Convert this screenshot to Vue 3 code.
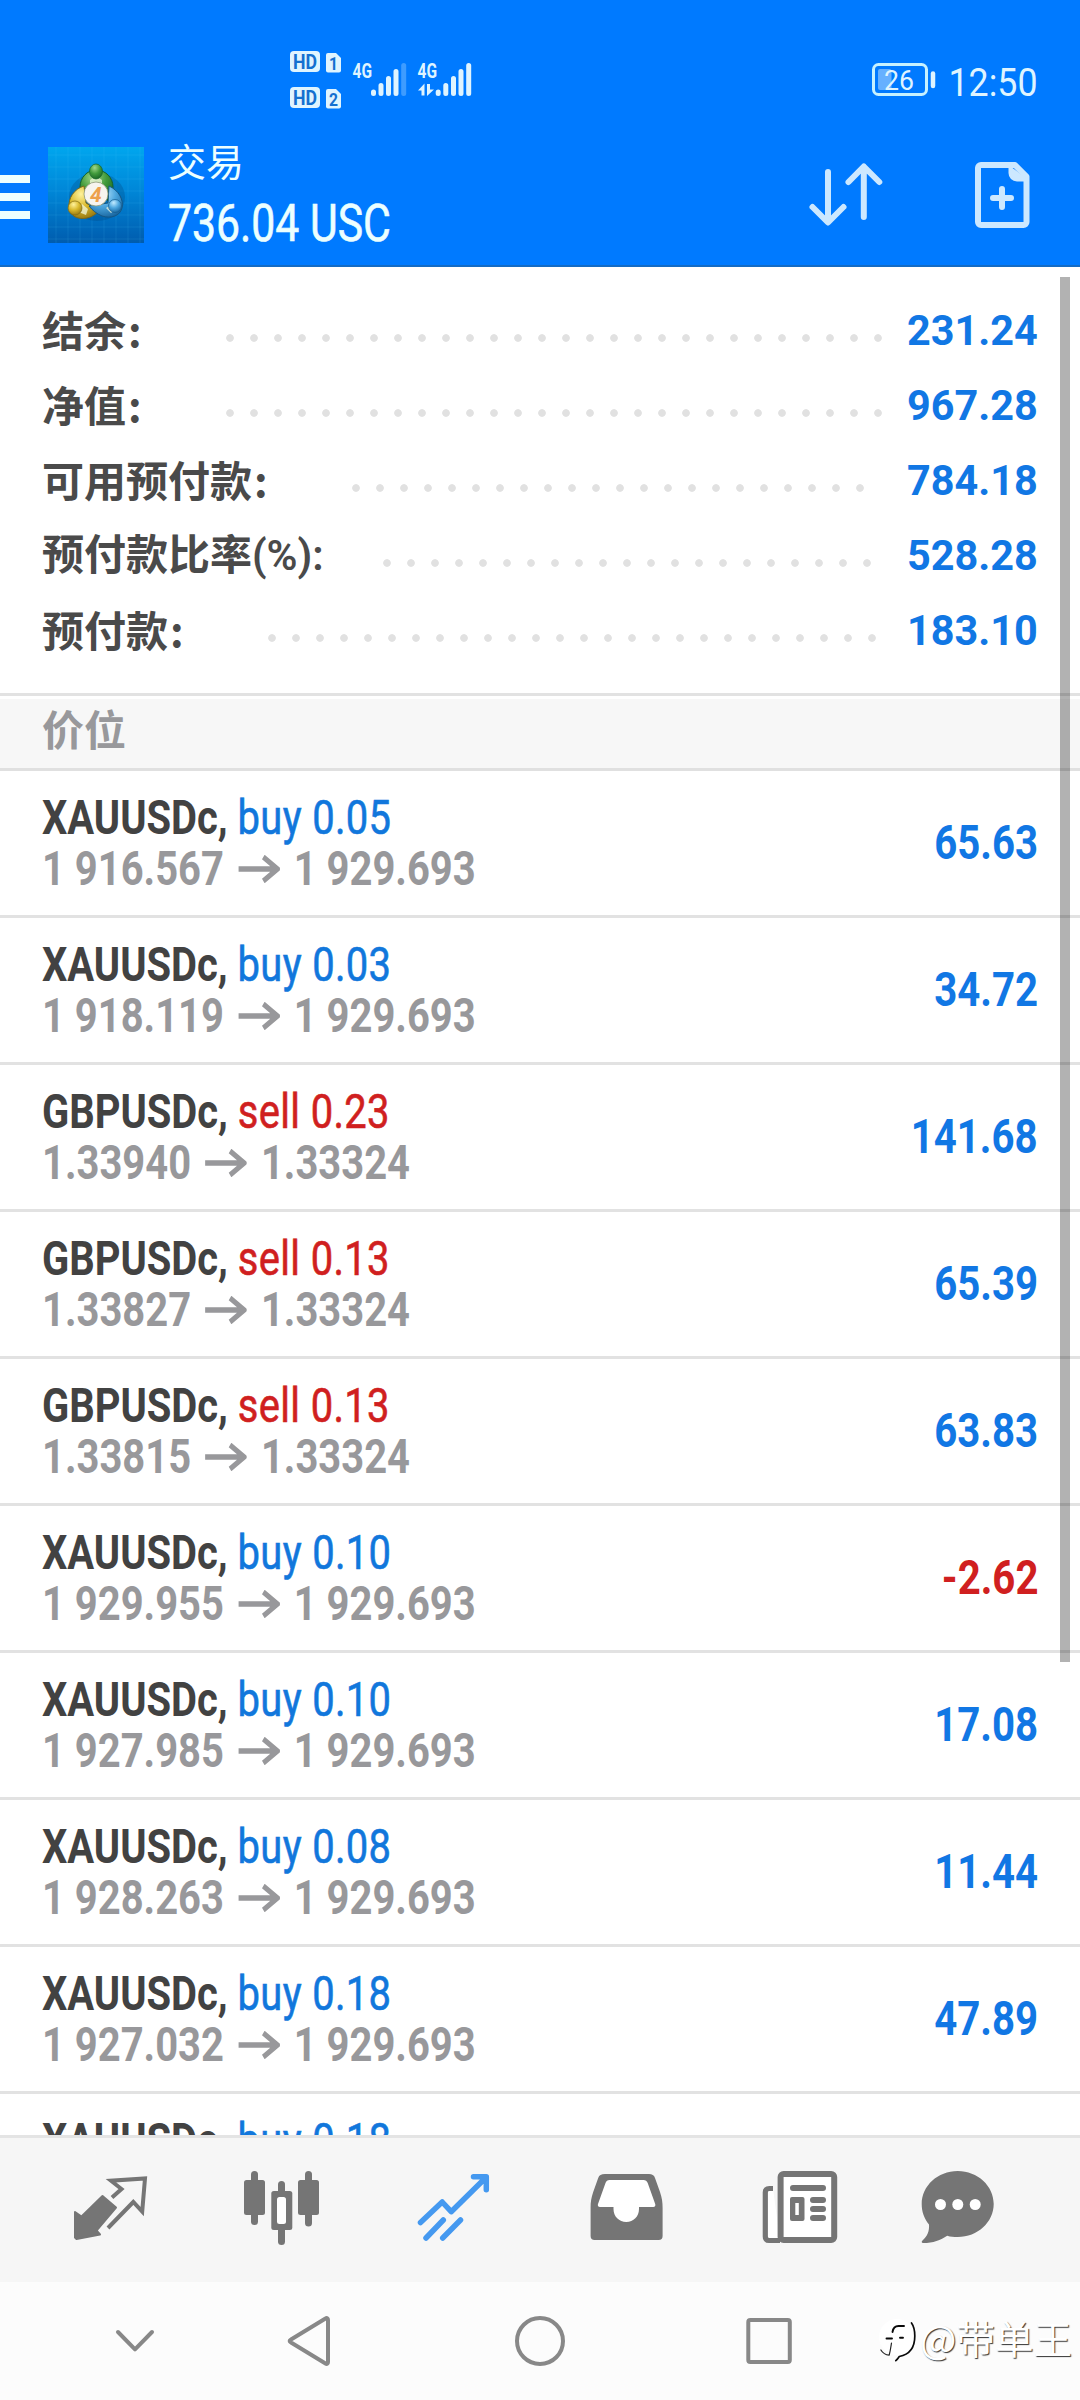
<script setup>
const summary = [
  { label: '结余', suffix: ':', value: '231.24', start: 226, dots: 28 },
  { label: '净值', suffix: ':', value: '967.28', start: 226, dots: 28 },
  { label: '可用预付款', suffix: ':', value: '784.18', start: 352, dots: 22 },
  { label: '预付款比率', latin: '(%):', value: '528.28', start: 383, dots: 21 },
  { label: '预付款', suffix: ':', value: '183.10', start: 268, dots: 26 },
]

const positions = [
  { symbol: 'XAUUSDc', side: 'buy', volume: '0.05', open: '1 916.567', price: '1 929.693', profit: '65.63' },
  { symbol: 'XAUUSDc', side: 'buy', volume: '0.03', open: '1 918.119', price: '1 929.693', profit: '34.72' },
  { symbol: 'GBPUSDc', side: 'sell', volume: '0.23', open: '1.33940', price: '1.33324', profit: '141.68' },
  { symbol: 'GBPUSDc', side: 'sell', volume: '0.13', open: '1.33827', price: '1.33324', profit: '65.39' },
  { symbol: 'GBPUSDc', side: 'sell', volume: '0.13', open: '1.33815', price: '1.33324', profit: '63.83' },
  { symbol: 'XAUUSDc', side: 'buy', volume: '0.10', open: '1 929.955', price: '1 929.693', profit: '-2.62' },
  { symbol: 'XAUUSDc', side: 'buy', volume: '0.10', open: '1 927.985', price: '1 929.693', profit: '17.08' },
  { symbol: 'XAUUSDc', side: 'buy', volume: '0.08', open: '1 928.263', price: '1 929.693', profit: '11.44' },
  { symbol: 'XAUUSDc', side: 'buy', volume: '0.18', open: '1 927.032', price: '1 929.693', profit: '47.89' },
  { symbol: 'XAUUSDc', side: 'buy', volume: '0.18', open: '', price: '', profit: '' },
]
</script>

<template>
  <div class="screen">
    <header class="top">
      <div class="status">
        <svg class="signals" width="190" height="64" viewBox="286 48 190 64">
          <g fill="#dff4ff">
            <rect x="290" y="51" width="30" height="21" rx="4" />
            <path d="M328 53h8l5 5v12.500a2 2 0 0 1-2 2h-11a2 2 0 0 1-2-2V55a2 2 0 0 1 2-2z" />
            <rect x="290" y="87" width="30" height="21" rx="4" />
            <path d="M328 89h8l5 5v12.500a2 2 0 0 1-2 2h-11a2 2 0 0 1-2-2V91a2 2 0 0 1 2-2z" />
          </g>
          <g class="chip">
            <text x="293" y="68.500" textLength="24" lengthAdjust="spacingAndGlyphs" font-size="20">HD</text>
            <text x="293" y="104.500" textLength="24" lengthAdjust="spacingAndGlyphs" font-size="20">HD</text>
            <text x="329" y="70" textLength="9" lengthAdjust="spacingAndGlyphs" font-size="19">1</text>
            <text x="329" y="106" textLength="9" lengthAdjust="spacingAndGlyphs" font-size="19">2</text>
          </g>
          <g class="net">
            <text x="352.500" y="78" textLength="19.500" lengthAdjust="spacingAndGlyphs">4G</text>
            <text x="417.500" y="78" textLength="19.500" lengthAdjust="spacingAndGlyphs">4G</text>
          </g>
          <g stroke="#dff4ff" stroke-width="5" stroke-linecap="round">
            <path d="M373.500 92v1.500M381 85.500v8M388.500 78.500v15M396 71.500v22" />
            <path d="M403.700 65.500v28" opacity=".28" />
            <path d="M438.200 92v1.500M445.800 85.500v8M453.500 78.500v15M461 71.500v22M468.700 65.500v28" />
          </g>
          <path d="M418 90.500l6.500-7v12h-3v-5zM427 84h3v5.500h4l-7 6.500z" fill="#dff4ff" />
        </svg>
        <svg class="battery" width="170" height="44" viewBox="870 58 170 44">
          <rect x="873.500" y="64.500" width="53" height="30" rx="5" fill="none" stroke="#c6f1ff" stroke-width="3" />
          <rect x="878" y="69" width="13.500" height="21" rx="2" fill="#66b0ff" />
          <path d="M933 73.500v12.500" stroke="#dff4ff" stroke-width="4.500" stroke-linecap="round" />
          <text x="884" y="90" font-size="28" textLength="30" lengthAdjust="spacingAndGlyphs">26</text>
          <text x="948.500" y="96" font-size="38" textLength="89" lengthAdjust="spacingAndGlyphs">12:50</text>
        </svg>
      </div>
      <div class="bar">
        <div class="burger"><i></i><i></i><i></i></div>
        <svg class="logo" width="96" height="96" viewBox="0 0 96 96">
          <defs>
            <linearGradient id="sky" x1="0" y1="0" x2="0" y2="1">
              <stop offset="0" stop-color="#00a6ee" />
              <stop offset=".45" stop-color="#0087d8" />
              <stop offset="1" stop-color="#005cae" />
            </linearGradient>
            <radialGradient id="green" cx=".4" cy=".25" r=".8">
              <stop offset="0" stop-color="#a2d78a" /><stop offset=".5" stop-color="#429b3c" /><stop offset="1" stop-color="#176322" />
            </radialGradient>
            <radialGradient id="gold" cx=".4" cy=".25" r=".8">
              <stop offset="0" stop-color="#fff29c" /><stop offset=".5" stop-color="#d9b92c" /><stop offset="1" stop-color="#947510" />
            </radialGradient>
            <radialGradient id="blue" cx=".4" cy=".25" r=".8">
              <stop offset="0" stop-color="#c1eaff" /><stop offset=".5" stop-color="#4da7df" /><stop offset="1" stop-color="#17649e" />
            </radialGradient>
          </defs>
          <rect width="96" height="96" fill="url(#sky)" />
          <path d="M8 0v96M20 0v96M32 0v96M44 0v96M56 0v96M68 0v96M80 0v96M92 0v96M0 8h96M0 20h96M0 32h96M0 44h96M0 56h96M0 68h96M0 80h96M0 92h96" stroke="#50c8ff" stroke-opacity=".13" />
          <ellipse cx="49" cy="50" rx="28" ry="24" fill="#003d70" opacity=".25" />
          <path d="M48 23c10 0 17 8 17 17 0 6-2 10-5 14L48 42 36 51c-3-3-4-7-4-11 0-9 7-17 16-17z" fill="url(#green)" stroke="#14612b" />
          <path d="M36 39c-10 3-16 12-15 22 1 8 9 12 18 10 5-1 9-4 12-7L38 56z" fill="url(#gold)" stroke="#7b6819" />
          <path d="M61 39c9 4 15 13 13 22-2 8-11 11-20 8-5-2-10-6-13-10l19-3z" fill="url(#blue)" stroke="#155785" />
          <path d="M42 33l6-4 6 4v4H42zM28 64l6-7 6 5-2 6zM58 61l6-4 5 4-6 5z" fill="#f2f8dc" opacity=".75" />
          <ellipse cx="48" cy="24.500" rx="6.500" ry="7.500" fill="url(#green)" stroke="#16632a" stroke-width=".7" />
          <circle cx="27" cy="61" r="7" fill="url(#gold)" stroke="#806b16" stroke-width=".7" />
          <circle cx="67" cy="59" r="6.500" fill="url(#blue)" stroke="#145b8e" stroke-width=".7" />
          <circle cx="48" cy="47" r="12" fill="#f7f4ef" stroke="#8f9a78" stroke-width=".8" />
          <text x="42" y="54.500" font-size="21" font-family="Roboto, sans-serif" font-style="italic" font-weight="700" fill="#eda04c">4</text>
        </svg>
        <div class="titles">
          <div class="title">交易</div>
          <div class="equity">736.04 USC</div>
        </div>
        <svg class="actions" width="230" height="76" viewBox="806 156 230 76" fill="none" stroke="#cce8ff" stroke-width="6" stroke-linecap="round" stroke-linejoin="round">
          <path d="M828 172v50M812.500 207l15.500 15.500 15.500-15.500M863.800 217v-50M848.500 182l15.300-15.500 15.500 15.500" />
          <path d="M981 165h34l11.500 11.500V222a3 3 0 0 1-3 3H981a3 3 0 0 1-3-3v-54a3 3 0 0 1 3-3z" />
          <path d="M1010 168v5c0 4 3 7 7 7h9z" fill="#cce8ff" stroke-width="3" />
          <path d="M993 198h18M1002 189v18" />
        </svg>
      </div>
    </header>

    <main class="content">
      <section class="summary">
        <div v-for="row in summary" :key="row.label" class="sum-row">
          <div class="label" :style="{ width: row.start - 42 + 'px' }">
            {{ row.label }}<span v-if="row.latin" class="latin">{{ row.latin }}</span><span v-else class="colon">{{ row.suffix }}</span>
          </div>
          <div class="dots" :style="{ width: row.dots * 24 + 'px' }"></div>
          <div class="amount">{{ row.value }}</div>
        </div>
      </section>
      <div class="section-head">价位</div>
      <div v-for="(p, i) in positions" :key="i" class="pos">
        <div class="info">
          <div class="line"><b>{{ p.symbol }},</b> <span class="deal" :class="p.side">{{ p.side }} {{ p.volume }}</span></div>
          <div v-if="p.open" class="line prices">
            <span>{{ p.open }}</span>
            <svg width="50" height="28" viewBox="0 0 50 28" preserveAspectRatio="none"><path d="M0 14h47M30 2l17 12-17 12" fill="none" stroke="#98989b" stroke-width="5.500" /></svg>
            <span>{{ p.price }}</span>
          </div>
        </div>
        <div v-if="p.profit" class="profit" :class="{ loss: p.profit.startsWith('-') }">{{ p.profit }}</div>
      </div>
      <div class="scrollbar"></div>
    </main>

    <nav class="tabs">
      <svg width="1080" height="144" viewBox="0 2138 1080 144">
        <path d="M75 2212l6.500 4.500 21-20.500 13.500 11.500-19.500 23 3.500 4-23.500 4.500-1.500-1.500z" fill="#757575" stroke="#757575" stroke-width="2" stroke-linejoin="round" />
        <path d="M112 2197.500l9.500-8.500-10.500-8.300 34-2.200-2.800 33-8.900-9.500-25.300 26" fill="none" stroke="#757575" stroke-width="4" />
        <g fill="#757575">
          <rect x="244" y="2180" width="21" height="35" rx="2.500" />
          <rect x="251" y="2171" width="7" height="54" rx="3.500" />
          <rect x="298" y="2180" width="21" height="35" rx="2.500" />
          <rect x="305" y="2171" width="7" height="55.500" rx="3.500" />
          <rect x="271.300" y="2191" width="21" height="39" rx="2.500" />
          <rect x="278" y="2181" width="7" height="64" rx="3.500" />
          <rect x="277" y="2197" width="9" height="27" rx="2.500" fill="#fff" />
        </g>
        <path d="M420.500 2222.500l21.700-20.500 9 9.700 35-34.500M473.500 2176.700h12.800v13M426 2238l17.300-18M442.700 2238l17.800-18" fill="none" stroke="#4599f0" stroke-width="5.500" stroke-linecap="round" stroke-linejoin="round" />
        <path d="M605 2174h44c3 0 5 1 6 4l5 14c2 6 2.600 10 2.600 16v28a4 4 0 0 1-4 4h-64a4 4 0 0 1-4-4v-28c0-6 .6-10 2.600-16l5-14c1-3 3-4 6.800-4z" fill="#757575" />
        <path d="M609.500 2180h34c2 0 3.500 1 4.200 3l7.500 21c.5 1.500 0 3-2 3H639v2c0 7.500-5.500 13-12.700 13s-12.800-5.500-12.800-13v-2H600c-2 0-2.500-1.500-2-3l7.500-21c.7-2 2-3 4-3z" fill="#fff" />
        <path d="M780 2240.500h-11c-2.500 0-3.700-1.500-3.700-4v-44c0-2.500 1.500-4 4-4h3.700" fill="#fff" stroke="#757575" stroke-width="5.200" />
        <rect x="780.600" y="2174" width="53.600" height="66" rx="3" fill="#fff" stroke="#757575" stroke-width="6" />
        <path d="M793 2188h30M813 2200h10M813 2209h10M813 2218h10" stroke="#757575" stroke-width="6" stroke-linecap="round" />
        <rect x="790" y="2197" width="14.500" height="24" rx="2" fill="#757575" />
        <rect x="795.300" y="2203" width="3.500" height="12" fill="#fff" />
        <path d="M957.700 2171c20 0 36 15 36 33s-16 33-36 33c-4 0-7-.3-10.500-1.300-6.500 4.500-14 7.300-24 7.300-2 0-1.700-1.600-.7-2.500 5-4.500 7-9.500 6.500-16-5-6-7.300-13-7.300-20.500 0-18 16-33 36-33z" fill="#757575" />
        <g fill="#fff"><circle cx="940.500" cy="2204.500" r="5.500" /><circle cx="957.800" cy="2204.500" r="5.500" /><circle cx="975.200" cy="2204.500" r="5.500" /></g>
      </svg>
    </nav>

    <footer class="sysnav">
      <svg width="876" height="118" viewBox="0 2282 876 118" fill="none" stroke="#888" stroke-width="4" stroke-linecap="round" stroke-linejoin="round">
        <path d="M118 2332l17 17.300 17-17.300" />
        <path d="M291 2339.500l34.500-21c1.500-1 2.500 0 2.500 1.500v42c0 1.500-1 2.500-2.500 1.500l-34.500-21c-1.800-1-1.800-2 0-3z" />
        <circle cx="540" cy="2341" r="23" />
        <rect x="748.300" y="2320" width="41.500" height="42" rx="2" />
      </svg>
      <div class="mark">
        <svg width="44" height="50" viewBox="876 2316 44 50" fill="none" stroke-linecap="round" stroke-linejoin="round">
          <circle cx="897" cy="2339" r="18" fill="#fff" />
          <path d="M892.500 2334c.6-4 3-6 6-6h5.500M886.500 2340.500h5.500M900 2339.800h3" stroke="#0a0a0a" stroke-width="1.900" />
          <path d="M891.500 2345c-.8 5-1.200 8-2.300 12.200-4-.4-6.500-2.200-8.300-5.200" stroke="#222" stroke-width="1.200" />
          <path d="M911.500 2325c2.200 3 3.300 7.500 3.300 13 0 12-5 18.500-15.500 20.500-1 1.500-2 3-3.500 4.200" stroke="#0a0a0a" stroke-width="1.700" />
        </svg>
        <span>@带单王</span>
      </div>
    </footer>
  </div>
</template>

<style>
body { margin: 0; }
</style>

<style scoped>
.screen {
  width: 1080px;
  height: 2400px;
  display: flex;
  flex-direction: column;
  overflow: hidden;
  background: #fff;
  font-family: Roboto, "Noto Sans CJK SC", sans-serif;
}
.screen svg { display: block; flex: none; }
.top {
  height: 267px;
  box-sizing: border-box;
  background: #007aff;
  border-bottom: 2px solid #146bc4;
  flex: none;
}
.status {
  height: 112px;
  box-sizing: border-box;
  padding: 48px 40px 0 286px;
  display: flex;
  justify-content: space-between;
}
.battery { margin-top: 10px; }
.signals text, .battery text { font-family: Roboto, sans-serif; }
.chip text { fill: #1470d0; font-weight: 700; }
.net text { fill: #dff4ff; font-size: 20px; font-weight: 700; }
.battery text { fill: #dff4ff; }
.bar { display: flex; height: 153px; }
.burger {
  width: 30px;
  padding-top: 63px;
  display: flex;
  flex-direction: column;
  gap: 10px;
}
.burger i { display: block; height: 8px; background: #ecffff; }
.logo { margin: 35px 0 0 18px; }
.titles { margin-left: 24px; width: 638px; color: #ecffff; }
.title { margin-top: 26px; font: 400 38px/44px "Noto Sans CJK SC", sans-serif; }
.equity {
  margin-top: 12px;
  font-size: 51px;
  line-height: 60px;
  white-space: nowrap;
  transform: scaleX(.838);
  transform-origin: left;
  -webkit-text-stroke: .6px #ecffff;
}
.actions { margin-top: 44px; }
.content {
  position: relative;
  height: 1868px;
  flex: none;
  overflow: hidden;
}
.summary {
  height: 429px;
  box-sizing: border-box;
  padding: 26px 42px 0;
  border-bottom: 3px solid #e2e2e2;
}
.sum-row { display: flex; height: 75px; align-items: center; }
.label {
  flex: none;
  margin-top: -4px;
  white-space: nowrap;
  font: 700 42px/60px "Noto Sans CJK SC", sans-serif;
  color: #4a4a4a;
}
.latin { font-family: Roboto, sans-serif; font-weight: 600; }
.colon { margin-left: 2px; }
.dots {
  flex: none;
  height: 8px;
  margin-top: 14px;
  background: radial-gradient(circle at 4px 4px, #e1e1e1 3.400px, transparent 4.200px) 0 0 / 24px 8px;
}
.amount {
  margin-left: auto;
  font-size: 42px;
  font-weight: 700;
  color: #1177e4;
  transform: scaleX(.985);
  transform-origin: right;
}
.section-head {
  height: 75px;
  box-sizing: border-box;
  border-top: 3px solid #fff;
  border-bottom: 3px solid #e0e0e0;
  background: #f7f7f7;
  padding-left: 42px;
  font: 700 42px/57px "Noto Sans CJK SC", sans-serif;
  color: #98989b;
}
.pos {
  height: 147px;
  box-sizing: border-box;
  border-bottom: 3px solid #e2e2e2;
  padding: 21px 42px 0;
  display: flex;
  justify-content: space-between;
}
.info { transform: scaleX(.832); transform-origin: left; }
.line { font-size: 48px; line-height: 51px; height: 51px; white-space: nowrap; }
.line b { color: #424242; }
.deal { letter-spacing: .4px; -webkit-text-stroke: .6px currentColor; }
.buy { color: #1177dc; }
.sell { color: #d01f20; }
.prices { display: flex; align-items: center; gap: 17px; font-weight: 700; color: #98989b; }
.profit {
  margin-top: 25px;
  font-size: 48px;
  line-height: 51px;
  font-weight: 700;
  color: #1177e4;
  transform: scaleX(.837);
  transform-origin: right;
}
.loss { color: #d01f20; }
.scrollbar {
  position: absolute;
  top: 10px;
  right: 10px;
  width: 10px;
  height: 1385px;
  background: rgba(0, 0, 0, .3);
}
.tabs { height: 147px; box-sizing: border-box; border-top: 3px solid #e4e4e4; background: #f6f6f6; flex: none; }
.sysnav { height: 118px; background: #fcfcfc; display: flex; flex: none; }
.mark { display: flex; align-items: center; height: 114px; }
.mark span {
  margin-top: -4px;
  font: 400 38.500px/50px "Noto Sans CJK SC", sans-serif;
  color: #fff;
  text-shadow: 1px 1px 1px #333;
  white-space: nowrap;
}
</style>
